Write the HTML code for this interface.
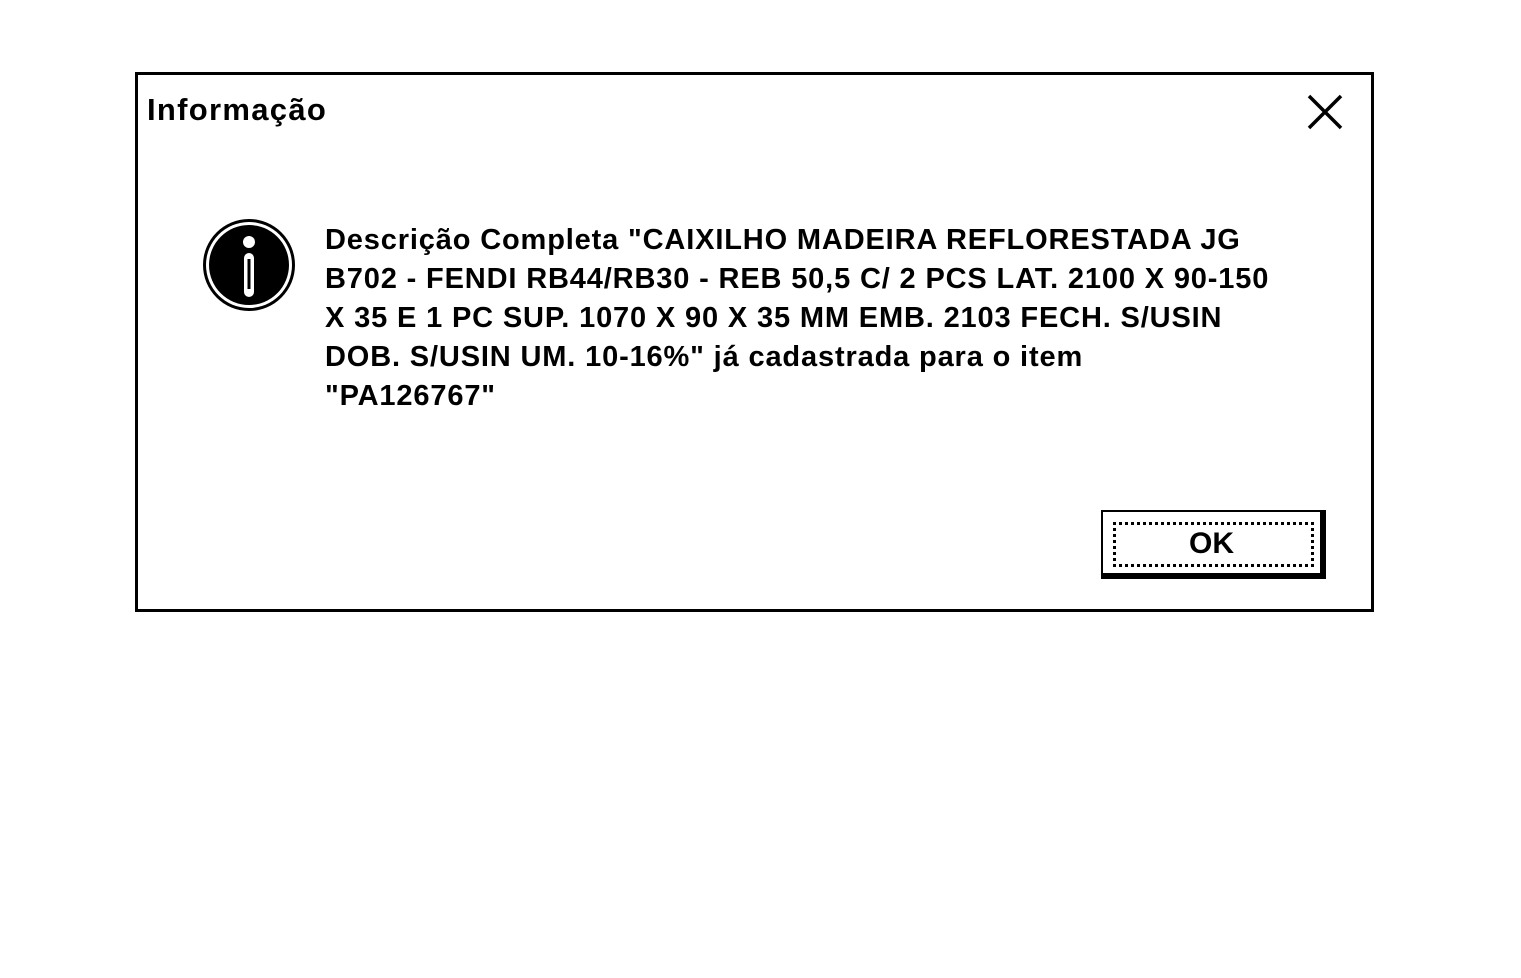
<!DOCTYPE html>
<html><head><meta charset="utf-8"><style>
body{margin:0;width:1521px;height:978px;background:#fff;position:relative;font-family:"Liberation Sans",sans-serif;color:#000;overflow:hidden}
.dlg{position:absolute;left:135px;top:72px;width:1233px;height:534px;border:3px solid #000}
.title{position:absolute;left:147px;top:92px;font-size:31px;font-weight:bold;letter-spacing:1.3px}
.x{position:absolute;left:1306px;top:94px}
.msg{position:absolute;left:325px;top:221px;font-size:29px;font-weight:bold;line-height:39px;white-space:nowrap;letter-spacing:0.85px}
.btn{position:absolute;left:1101px;top:510px;width:217px;height:61px;border:2px solid #000;border-right-width:6px;border-bottom-width:6px;box-sizing:content-box}
.focus{position:absolute;left:10px;top:10px;right:6px;bottom:6px;border:3px dotted #000}
.ok{position:absolute;left:0;right:0;top:15px;text-align:center;font-size:30px;font-weight:bold}
</style></head><body>
<div class="dlg"></div>
<div class="title">Informação</div>
<svg class="x" width="38" height="36" viewBox="0 0 38 36"><path d="M3 2L35 34M35 2L3 34" stroke="#000" stroke-width="3.5"/></svg>
<svg style="position:absolute;left:200px;top:217px" width="98" height="98" viewBox="0 0 98 98">
<circle cx="49" cy="48" r="46" fill="#000"/><circle cx="49" cy="48" r="43" fill="#fff"/><circle cx="49" cy="48" r="40" fill="#000"/>
<circle cx="49" cy="25" r="6" fill="#fff"/><rect x="44" y="36" width="10" height="44" rx="5" fill="#fff"/><rect x="47.5" y="42" width="3" height="30" fill="#000"/>
</svg>
<div class="msg">Descrição Completa "CAIXILHO MADEIRA REFLORESTADA JG<br>B702 - FENDI RB44/RB30 - REB 50,5 C/ 2 PCS LAT. 2100 X 90-150<br>X 35 E 1 PC SUP. 1070 X 90 X 35 MM EMB. 2103 FECH. S/USIN<br>DOB. S/USIN UM. 10-16%" já cadastrada para o item<br>"PA126767"</div>
<div class="btn"><div class="focus"></div><div class="ok">OK</div></div>
</body></html>
